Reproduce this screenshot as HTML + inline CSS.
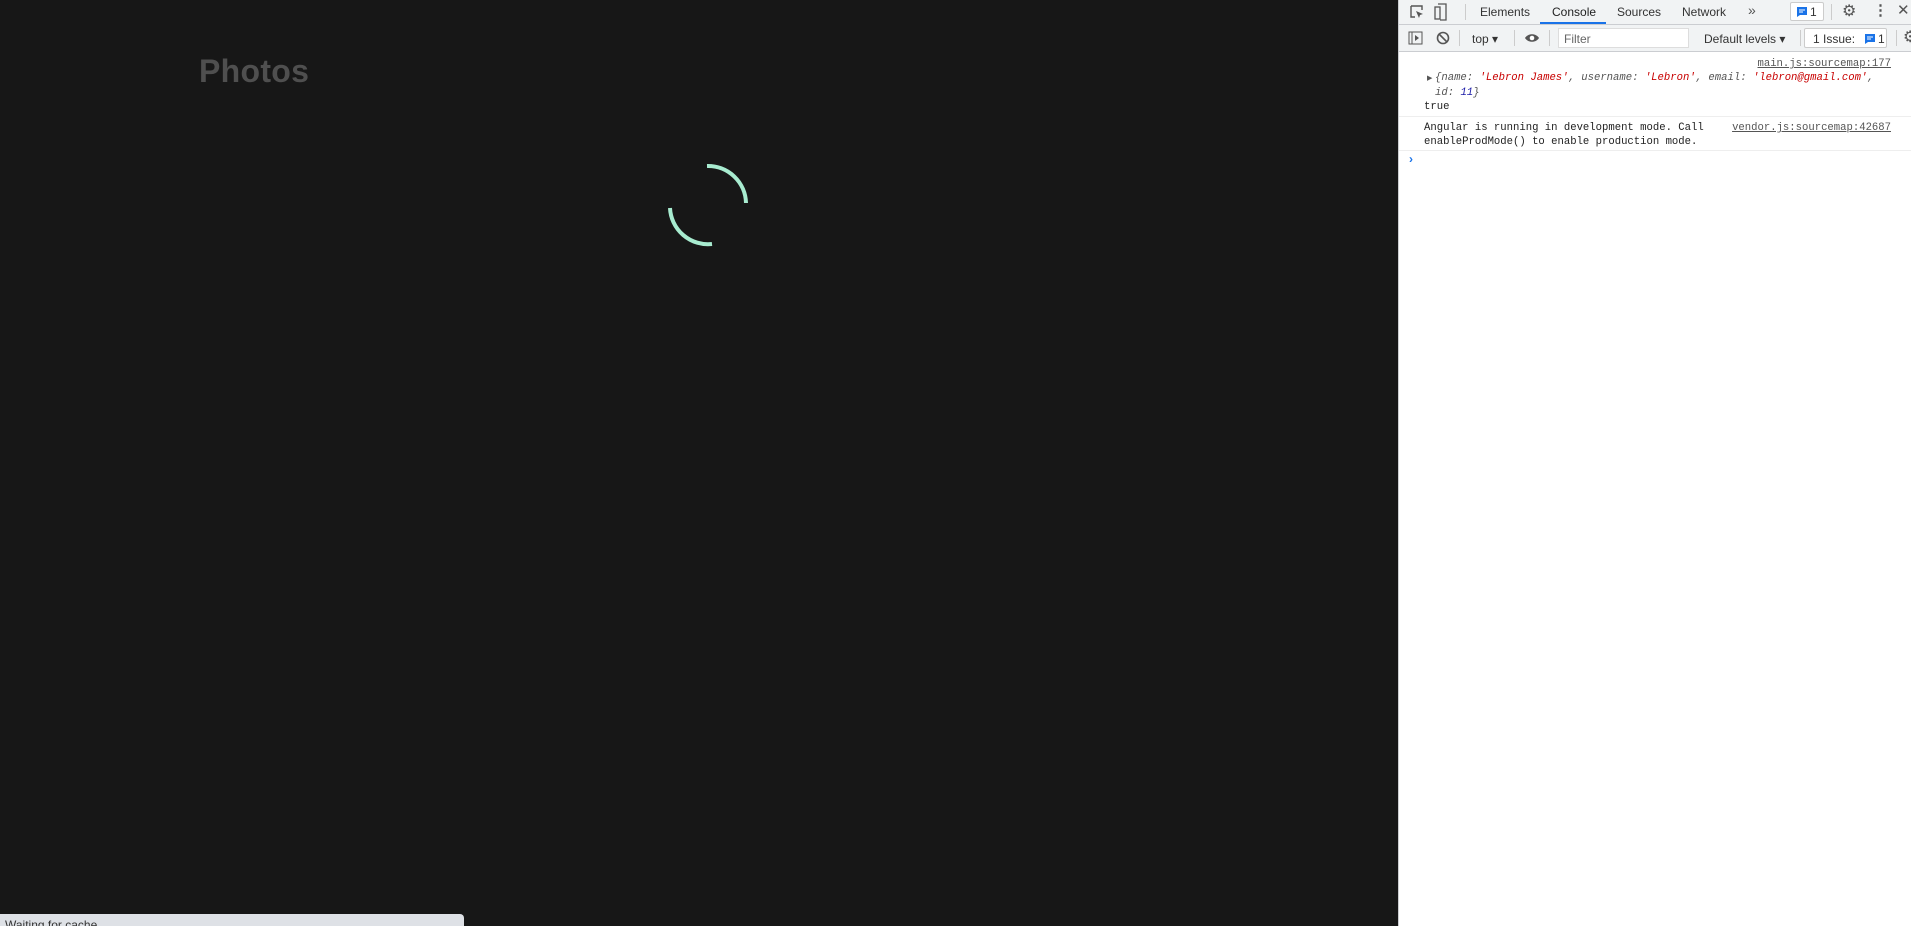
<!DOCTYPE html>
<html><head><meta charset="utf-8"><style>
*{margin:0;padding:0;box-sizing:border-box}
body{width:1911px;height:926px;overflow:hidden;background:#171717;position:relative;font-family:"Liberation Sans",sans-serif}
.a{position:absolute;white-space:nowrap}
#dt{position:absolute;left:1398px;top:0;width:513px;height:926px;background:#fff;border-left:1px solid #cbcdd1}
.m{font-family:"Liberation Mono",monospace;font-size:10.6px;color:#222;line-height:14px}
.tb{font-size:12px;color:#333}
</style></head><body>
<div class="a" style="left:199px;top:53px;font-size:32px;font-weight:bold;color:#4f4f4f;letter-spacing:0.3px">Photos</div>
<svg class="a" style="left:660px;top:158px" width="96" height="96" viewBox="0 0 96 96">
<path d="M47 8 A38 38 0 0 1 86 45" fill="none" stroke="#a8ecd0" stroke-width="4"/>
<path d="M10 50 A38 38 0 0 0 52 86" fill="none" stroke="#a8ecd0" stroke-width="4"/>
</svg>
<div class="a" style="left:0;top:914px;width:464px;height:12px;background:#dee1e6;border-top-right-radius:4px;font-size:12px;color:#333;padding-left:5px;line-height:22px;overflow:hidden">Waiting for cache</div>

<div id="dt">
<div class="a" style="left:0;top:0;width:513px;height:25px;background:#f1f3f4;border-bottom:1px solid #cbcdd1"></div>
<div class="a" style="left:0;top:25px;width:513px;height:27px;background:#f1f3f4;border-bottom:1px solid #cbcdd1"></div>
<svg class="a" style="left:10px;top:4px" width="16" height="16"><path d="M2 2h11v4M2 2v11h4" fill="none" stroke="#555" stroke-width="1.4"/><path d="M7 7l7 3-3 1-1 3z" fill="#555"/></svg>
<svg class="a" style="left:35px;top:3px" width="14" height="18"><rect x="1" y="4" width="5" height="12" fill="none" stroke="#555" stroke-width="1.3"/><path d="M4 1h8v16H6" fill="none" stroke="#555" stroke-width="1.3"/></svg>
<div class="a" style="left:66px;top:4px;width:1px;height:16px;background:#ccc"></div>
<div class="a tb" style="left:81px;top:5px">Elements</div>
<div class="a tb" style="left:153px;top:5px;color:#222">Console</div>
<div class="a" style="left:141px;top:22px;width:66px;height:2px;background:#1a73e8"></div>
<div class="a tb" style="left:218px;top:5px">Sources</div>
<div class="a tb" style="left:283px;top:5px">Network</div>
<div class="a tb" style="left:349px;top:2px;font-size:14px;color:#555">»</div>
<div class="a" style="left:391px;top:2px;width:34px;height:19px;border:1px solid #ccc;border-radius:2px;background:#fff"></div>
<svg class="a" style="left:397px;top:6px" width="12" height="12"><path d="M1 1h10v8H4l-3 2z" fill="#1a73e8"/><path d="M3 4h6M3 6h4" stroke="#fff"/></svg>
<div class="a tb" style="left:411px;top:5px">1</div>
<div class="a" style="left:432px;top:4px;width:1px;height:16px;background:#ccc"></div>
<div class="a" style="left:443px;top:1px;font-size:16px;color:#555">⚙</div>
<div class="a" style="left:474px;top:1px;font-size:15px;color:#555;font-weight:bold">⋮</div>
<div class="a" style="left:498px;top:1px;font-size:15px;color:#555">✕</div>
<svg class="a" style="left:9px;top:31px" width="15" height="14"><rect x="1" y="1" width="13" height="12" fill="none" stroke="#555"/><path d="M4 1v12" stroke="#555"/><path d="M7 4l4 3-4 3z" fill="#555"/></svg>
<svg class="a" style="left:37px;top:31px" width="14" height="14"><circle cx="7" cy="7" r="5.5" fill="none" stroke="#555" stroke-width="1.6"/><path d="M3 3l8 8" stroke="#555" stroke-width="1.6"/></svg>
<div class="a" style="left:60px;top:30px;width:1px;height:16px;background:#ccc"></div>
<div class="a tb" style="left:73px;top:32px">top ▾</div>
<div class="a" style="left:115px;top:30px;width:1px;height:16px;background:#ccc"></div>
<svg class="a" style="left:125px;top:32px" width="16" height="12"><path d="M1 6C4 1 12 1 15 6 12 11 4 11 1 6z" fill="#555"/><circle cx="8" cy="6" r="2.3" fill="#fff"/></svg>
<div class="a" style="left:150px;top:30px;width:1px;height:16px;background:#ccc"></div>
<div class="a" style="left:159px;top:28px;width:131px;height:20px;border:1px solid #ddd;background:#fff;font-size:12px;color:#666;padding:3px 5px">Filter</div>
<div class="a tb" style="left:305px;top:32px">Default levels ▾</div>
<div class="a" style="left:401px;top:30px;width:1px;height:16px;background:#ccc"></div>
<div class="a" style="left:405px;top:28px;width:83px;height:20px;border:1px solid #ccc;border-radius:2px;background:#fff"></div>
<div class="a tb" style="left:414px;top:32px">1 Issue:</div>
<svg class="a" style="left:465px;top:33px" width="12" height="12"><path d="M1 1h10v8H4l-3 2z" fill="#1a73e8"/><path d="M3 4h6M3 6h4" stroke="#fff"/></svg>
<div class="a tb" style="left:479px;top:32px">1</div>
<div class="a" style="left:497px;top:30px;width:1px;height:16px;background:#ccc"></div>
<div class="a" style="left:504px;top:27px;font-size:16px;color:#555">⚙</div>
<div class="a m" style="right:20px;top:57px;color:#555;text-decoration:underline">main.js:sourcemap:177</div>
<div class="a" style="left:28px;top:74px;font-size:7px;color:#555">▶</div>
<div class="a m" style="left:36px;top:71px;font-style:italic;color:#555">{name: <span style="color:#c80000">'Lebron James'</span>, username: <span style="color:#c80000">'Lebron'</span>, email: <span style="color:#c80000">'lebron@gmail.com'</span>,</div>
<div class="a m" style="left:36px;top:86px;font-style:italic;color:#555">id: <span style="color:#1a1aa6">11</span>}</div>
<div class="a m" style="left:25px;top:100px">true</div>
<div class="a" style="left:0;top:116px;width:513px;height:1px;background:#eee"></div>
<div class="a m" style="left:25px;top:121px">Angular is running in development mode. Call</div>
<div class="a m" style="right:20px;top:121px;color:#555;text-decoration:underline">vendor.js:sourcemap:42687</div>
<div class="a m" style="left:25px;top:135px">enableProdMode() to enable production mode.</div>
<div class="a" style="left:0;top:150px;width:513px;height:1px;background:#eee"></div>
<div class="a" style="left:10px;top:152px;font-size:12px;color:#1a73e8;font-weight:bold">›</div>
</div>
</body></html>
